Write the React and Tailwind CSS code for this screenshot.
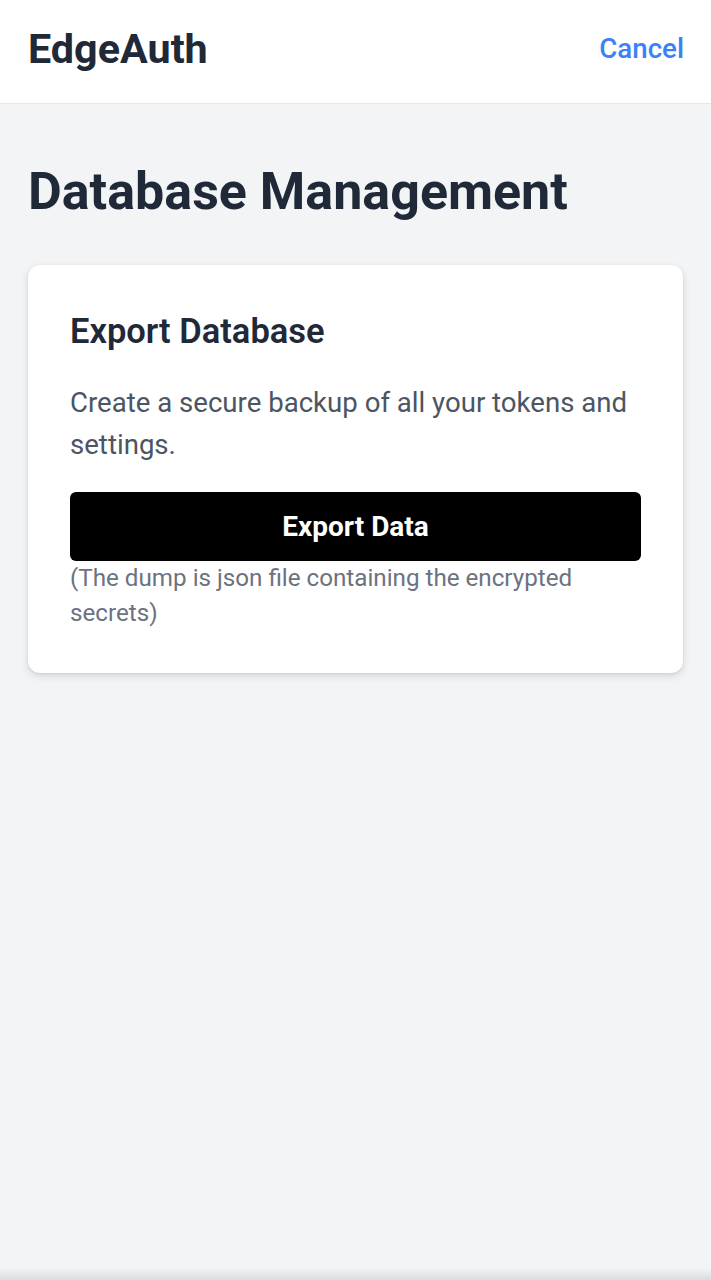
export default function App() {
  return (
    <div
      className="relative min-h-[1280px] bg-[#f3f4f6] overflow-hidden"
      style={{ fontFamily: 'Roboto, "Noto Sans", sans-serif' }}
    >
      <header className="flex h-[104px] items-center justify-between border-b border-[#e5e7eb] bg-white pb-[6px] pl-[28px] pr-[27px]">
        <h1 className="text-[41.3px] font-bold leading-[56px] text-[#1f2937]">EdgeAuth</h1>
        <button className="text-[27.7px] font-medium leading-[42px] text-[#3b82f6]">Cancel</button>
      </header>
      <main className="px-[28px] pt-[56px]">
        <h2 className="mb-[42px] text-[52px] font-bold leading-[63px] text-[#1f2937]">
          Database Management
        </h2>
        <section className="rounded-[12px] bg-white p-[42px] shadow-[0_3px_8px_rgba(0,0,0,0.12),0_1px_3px_rgba(0,0,0,0.08)]">
          <h3 className="mb-[26px] text-[34.5px] font-semibold leading-[49px] text-[#1f2937]">
            Export Database
          </h3>
          <p className="mb-[26px] text-[27.6px] leading-[42px] text-[#4b5563]">
            Create a secure backup of all your tokens and settings.
          </p>
          <button className="flex h-[69px] w-full items-center justify-center rounded-[6px] bg-black text-[28px] font-bold text-white">
            Export Data
          </button>
          <p className="text-[24.2px] leading-[35px] text-[#6b7280]">
            (The dump is json file containing the encrypted secrets)
          </p>
        </section>
      </main>
      <div className="pointer-events-none absolute bottom-0 left-0 h-[12px] w-full bg-gradient-to-b from-transparent to-[#dcdcdd]" />
    </div>
  );
}
